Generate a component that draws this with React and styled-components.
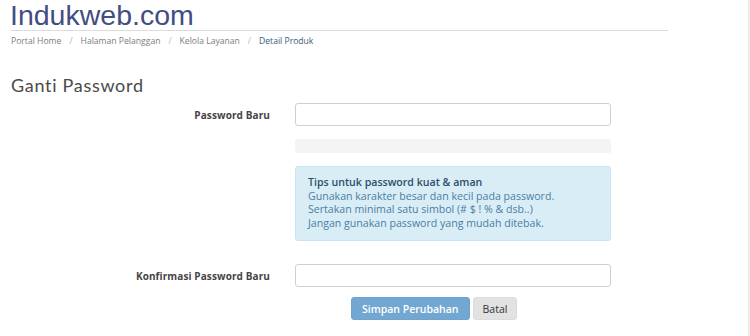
import React from "react";
import styled, { createGlobalStyle } from "styled-components";

const Global = createGlobalStyle`
  html, body { margin: 0; padding: 0; background: #fff; }
  body { font-family: "Open Sans", "Liberation Sans", sans-serif; }
  * { box-sizing: border-box; }
`;

const Page = styled.div`
  width: 750px;
  height: 336px;
  overflow: hidden;
  border-right: 2px solid #ececec;
  display: flex;
  flex-direction: column;
`;

const Header = styled.header`
  width: 658px;
  margin-left: 10px;
  border-bottom: 1px solid #dcdcdc;
  height: 31px;
  display: flex;
  align-items: center;
`;

const Logo = styled.div`
  font-family: "Liberation Sans", Arial, sans-serif;
  font-size: 28.5px;
  line-height: 33px;
  color: #414e82;
`;

const Crumbs = styled.nav`
  display: flex;
  gap: 8px;
  margin: 4px 0 0 11px;
  font-size: 8.6px;
  line-height: 12px;
`;

const Crumb = styled.span`
  color: ${(p) => (p.$active ? "#3a5a7c" : "#7d7d7d")};
`;

const Sep = styled.span`
  color: #b5b5b5;
`;

const Title = styled.h2`
  margin: 27px 0 0 11px;
  font-family: Lato, "Open Sans", sans-serif;
  font-weight: 400;
  font-size: 18px;
  line-height: 22px;
  color: #4a4a4a;
  letter-spacing: 0.7px;
`;

const Form = styled.div`
  display: grid;
  grid-template-columns: 270px 316px;
  column-gap: 25px;
  align-items: center;
  margin-top: 7px;
`;

const Label = styled.label`
  text-align: right;
  font-size: 10px;
  font-weight: 700;
  color: #444;
  letter-spacing: 0.1px;
`;

const Input = styled.div`
  height: 23px;
  border: 1px solid #cfcfcf;
  border-radius: 3px;
  background: #fff;
`;

const Bar = styled.div`
  height: 14px;
  border-radius: 2px;
  background: #f3f4f5;
  margin-top: 13px;
`;

const Alert = styled.div`
  margin-top: 13px;
  background: #d9edf7;
  border: 1px solid #c6e6f3;
  border-radius: 3px;
  padding: 9px 12px 11px;
  font-size: 10.6px;
  line-height: 13.7px;
  color: #4a7ea2;
  height: 75px;
`;

const AlertTitle = styled.div`
  font-weight: 600;
  color: #2c4d68;
`;

const Spacer = styled.div`
  height: ${(p) => p.$h}px;
`;

const Actions = styled.div`
  display: flex;
  gap: 3px;
  margin-top: 10px;
  padding-left: 351px;
`;

const Button = styled.button`
  font-family: "Open Sans", sans-serif;
  font-size: 10.5px;
  font-weight: ${(p) => (p.$primary ? 600 : 400)};
  height: 23px;
  padding: 0 ${(p) => (p.$primary ? 10 : 9)}px;
  border-radius: 3px;
  border: 1px solid ${(p) => (p.$primary ? "#6ea3ce" : "#dcdcdc")};
  background: ${(p) => (p.$primary ? "#72a7d1" : "#e2e2e2")};
  color: ${(p) => (p.$primary ? "#fff" : "#333")};
`;

export default function App() {
  return (
    <Page>
      <Global />
      <Header>
        <Logo>Indukweb.com</Logo>
      </Header>
      <Crumbs>
        <Crumb>Portal Home</Crumb>
        <Sep>/</Sep>
        <Crumb>Halaman Pelanggan</Crumb>
        <Sep>/</Sep>
        <Crumb>Kelola Layanan</Crumb>
        <Sep>/</Sep>
        <Crumb $active>Detail Produk</Crumb>
      </Crumbs>
      <Title>Ganti Password</Title>
      <Form>
        <Label>Password Baru</Label>
        <Input />
        <span />
        <Bar />
        <span />
        <Alert>
          <AlertTitle>Tips untuk password kuat &amp; aman</AlertTitle>
          <div>Gunakan karakter besar dan kecil pada password.</div>
          <div>Sertakan minimal satu simbol (# $ ! % &amp; dsb..)</div>
          <div>Jangan gunakan password yang mudah ditebak.</div>
        </Alert>
        <span />
        <Spacer $h={23} />
        <Label>Konfirmasi Password Baru</Label>
        <Input />
      </Form>
      <Actions>
        <Button $primary>Simpan Perubahan</Button>
        <Button>Batal</Button>
      </Actions>
    </Page>
  );
}
